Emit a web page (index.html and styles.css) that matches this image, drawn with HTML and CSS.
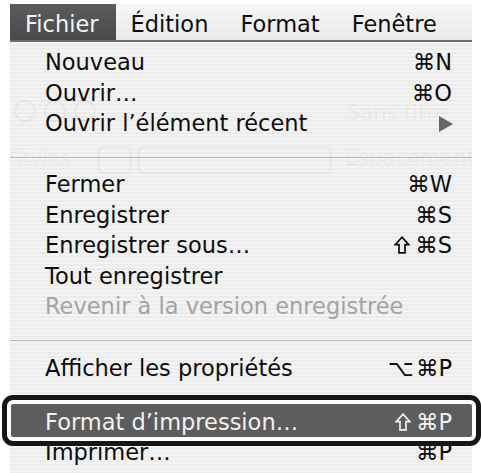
FILE: index.html
```html
<!DOCTYPE html>
<html lang="fr">
<head>
<meta charset="utf-8">
<title>Menu Fichier</title>
<link rel="stylesheet" href="styles.css">
</head>
<body>
<div class="screen">
  <nav class="menubar">
    <span class="menubar-item is-open">Fichier</span>
    <span class="menubar-item">Édition</span>
    <span class="menubar-item">Format</span>
    <span class="menubar-item">Fenêtre</span>
  </nav>
  <div class="menu">
    <div class="ghost" aria-hidden="true">
      <span class="ghost-dot dot-1"></span>
      <span class="ghost-dot dot-2"></span>
      <span class="ghost-dot dot-3"></span>
      <span class="ghost-title">Sans titre</span>
      <span class="ghost-styles">Styles</span>
      <span class="ghost-box box-1"></span>
      <span class="ghost-box box-2"></span>
      <span class="ghost-spacing">Espacement</span>
    </div>
    <div class="item"><span class="label">Nouveau</span><span class="key">⌘N</span></div>
    <div class="item"><span class="label">Ouvrir…</span><span class="key">⌘O</span></div>
    <div class="item"><span class="label">Ouvrir l’élément récent</span><span class="submenu"></span></div>
    <div class="sep sep-a"></div>
    <div class="item"><span class="label">Fermer</span><span class="key">⌘W</span></div>
    <div class="item"><span class="label">Enregistrer</span><span class="key">⌘S</span></div>
    <div class="item"><span class="label">Enregistrer sous…</span><span class="key"><svg class="shift" viewBox="0 0 16 18" aria-hidden="true"><path d="M8 1.2 L14.8 8.6 H11 V16.8 H5 V8.6 H1.2 Z"/></svg>⌘S</span></div>
    <div class="item"><span class="label">Tout enregistrer</span></div>
    <div class="item is-disabled"><span class="label">Revenir à la version enregistrée</span></div>
    <div class="sep sep-b"></div>
    <div class="item"><span class="label">Afficher les propriétés</span><span class="key"><span class="mod">⌥</span>⌘P</span></div>
    <div class="sep sep-c"></div>
    <div class="item is-selected"><span class="label">Format d’impression…</span><span class="key"><svg class="shift" viewBox="0 0 16 18" aria-hidden="true"><path d="M8 1.2 L14.8 8.6 H11 V16.8 H5 V8.6 H1.2 Z"/></svg>⌘P</span></div>
    <div class="item"><span class="label">Imprimer…</span><span class="key">⌘P</span></div>
  </div>
</div>
</body>
</html>
```

FILE: styles.css
```css
html, body {
  margin: 0;
  background: #ffffff;
}

body {
  width: 481px;
  height: 473px;
  overflow: hidden;
  font-family: "DejaVu Sans", "Liberation Sans", sans-serif;
  font-size: 22.5px;
  color: #0d0d0d;
}

.screen {
  padding: 4px 9px 0 10px;
}

.menubar {
  display: flex;
  height: 36px;
  background: linear-gradient(#f7f7f7, #e9e9e9);
  border-bottom: 2px solid #6e6e6e;
}

.menubar-item {
  padding: 4px 17px 0 15px;
  line-height: 32px;
  white-space: nowrap;
}

.menubar-item.is-open {
  background: linear-gradient(#5c5c5c, #4a4a4a);
  color: #f4f4f4;
}

.menu {
  position: relative;
  z-index: 0;
  padding-top: 5px;
  height: 480px;
  background: repeating-linear-gradient(#f3f3f3 0 2px, #ececec 2px 4px);
}

.item {
  display: flex;
  justify-content: space-between;
  align-items: center;
  height: 30.5px;
  line-height: 30.5px;
  padding: 0 20px 0 35px;
  white-space: nowrap;
}

.key {
  display: flex;
  align-items: center;
}

.item.is-disabled {
  color: #a3a3a3;
}

.item.is-selected {
  position: relative;
  height: 33px;
  line-height: 30px;
  padding-top: 3px;
  box-sizing: border-box;
  background: #5d5d5d;
  color: #f1f1f1;
}

.item.is-selected::after {
  content: "";
  position: absolute;
  top: -9px;
  bottom: -9px;
  left: -8px;
  right: -9px;
  border: 5px solid #161616;
  border-radius: 11px;
  box-shadow: inset 0 0 0 4px #ffffff;
}

.mod {
  margin-right: 2px;
}

.shift {
  width: 16px;
  height: 18px;
  margin-right: 5px;
  margin-top: -1px;
  fill: none;
  stroke: currentColor;
  stroke-width: 1.7;
  stroke-linejoin: miter;
}

.submenu {
  width: 0;
  height: 0;
  margin-top: 2px;
  margin-right: -1px;
  border-left: 14px solid #676767;
  border-top: 8px solid transparent;
  border-bottom: 8px solid transparent;
}

.sep {
  box-sizing: border-box;
}

.sep::after {
  content: "";
  display: block;
  height: 1px;
  background: #bdbdbd;
}

.sep-a {
  height: 30.5px;
  padding-top: 18px;
}

.sep-b {
  height: 31.5px;
  padding-top: 18px;
}

.sep-c {
  height: 20.5px;
  padding-top: 12px;
}

/* faint window content seen through the translucent menu */
.ghost {
  position: absolute;
  z-index: -1;
  inset: 0;
  color: rgba(0, 0, 0, 0.045);
  pointer-events: none;
}

.ghost-title,
.ghost-styles,
.ghost-spacing {
  position: absolute;
  line-height: 1;
}

.ghost-title {
  left: 337px;
  top: 61px;
  font-size: 21px;
}

.ghost-styles {
  left: 0;
  top: 106px;
  font-size: 20px;
}

.ghost-spacing {
  left: 335px;
  top: 106px;
  font-size: 21px;
}

.ghost-dot {
  position: absolute;
  top: 58px;
  width: 18px;
  height: 18px;
  border: 2px solid rgba(0, 0, 0, 0.04);
  border-radius: 50%;
}

.dot-1 { left: 4px; }
.dot-2 { left: 34px; }
.dot-3 { left: 64px; }

.ghost-box {
  position: absolute;
  top: 104px;
  height: 24px;
  border: 2px solid rgba(0, 0, 0, 0.04);
  border-radius: 5px;
}

.box-1 { left: 88px; width: 30px; }
.box-2 { left: 128px; width: 190px; }
```
